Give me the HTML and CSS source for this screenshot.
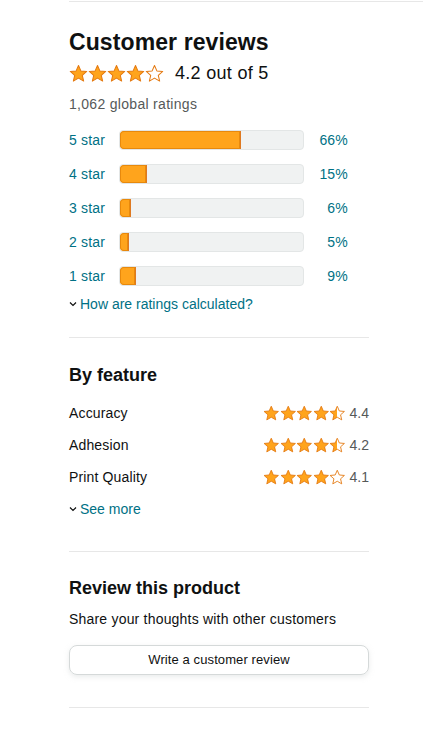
FILE: index.html
```html
<!DOCTYPE html>
<html lang="en">
<head>
    <meta charset="UTF-8">
    <title>Customer reviews</title>
    <link rel="stylesheet" href="styles.css">
</head>
<body>
    <svg width="0" height="0" class="defs">
        <defs>
            <linearGradient id="half">
                <stop offset="50%" stop-color="#FFA41C"/>
                <stop offset="50%" stop-color="#fff"/>
            </linearGradient>
            <symbol id="star" viewBox="0 0 24 24">
                <path d="M12 1.8l3 6.9 7.4.7-5.6 4.9 1.7 7.3L12 17.8l-6.5 3.8 1.7-7.3-5.6-4.9 7.4-.7z"/>
            </symbol>
        </defs>
    </svg>

    <div class="top-rule"></div>

    <div class="reviews">
        <h2 class="title">Customer reviews</h2>
        <div class="overall">
            <span class="stars big">
                <svg class="full"><use href="#star"/></svg>
                <svg class="full"><use href="#star"/></svg>
                <svg class="full"><use href="#star"/></svg>
                <svg class="full"><use href="#star"/></svg>
                <svg class="empty"><use href="#star"/></svg>
            </span>
            <span class="overall-text">4.2 out of 5</span>
        </div>
        <div class="total">1,062 global ratings</div>

        <div class="histogram">
            <div class="hist-row">
                <a class="hist-label" href="#">5 star</a>
                <div class="meter"><div class="meter-fill" style="width: 66%"></div></div>
                <a class="hist-pct" href="#">66%</a>
            </div>
            <div class="hist-row">
                <a class="hist-label" href="#">4 star</a>
                <div class="meter"><div class="meter-fill" style="width: 15%"></div></div>
                <a class="hist-pct" href="#">15%</a>
            </div>
            <div class="hist-row">
                <a class="hist-label" href="#">3 star</a>
                <div class="meter"><div class="meter-fill" style="width: 6%"></div></div>
                <a class="hist-pct" href="#">6%</a>
            </div>
            <div class="hist-row">
                <a class="hist-label" href="#">2 star</a>
                <div class="meter"><div class="meter-fill" style="width: 5%"></div></div>
                <a class="hist-pct" href="#">5%</a>
            </div>
            <div class="hist-row">
                <a class="hist-label" href="#">1 star</a>
                <div class="meter"><div class="meter-fill" style="width: 9%"></div></div>
                <a class="hist-pct" href="#">9%</a>
            </div>
        </div>

        <a class="expander calc" href="#">
            <svg class="chevron" viewBox="0 0 8 6"><path d="M1 1.5l3 3 3-3"/></svg>How are ratings calculated?
        </a>

        <hr class="divider first">

        <h3 class="subtitle">By feature</h3>
        <div class="features">
            <div class="feature-row">
                <span class="feature-name">Accuracy</span>
                <span class="feature-score">
                    <span class="stars small">
                        <svg class="full"><use href="#star"/></svg>
                        <svg class="full"><use href="#star"/></svg>
                        <svg class="full"><use href="#star"/></svg>
                        <svg class="full"><use href="#star"/></svg>
                        <svg class="half"><use href="#star"/></svg>
                    </span>
                    <span class="feature-value">4.4</span>
                </span>
            </div>
            <div class="feature-row">
                <span class="feature-name">Adhesion</span>
                <span class="feature-score">
                    <span class="stars small">
                        <svg class="full"><use href="#star"/></svg>
                        <svg class="full"><use href="#star"/></svg>
                        <svg class="full"><use href="#star"/></svg>
                        <svg class="full"><use href="#star"/></svg>
                        <svg class="half"><use href="#star"/></svg>
                    </span>
                    <span class="feature-value">4.2</span>
                </span>
            </div>
            <div class="feature-row">
                <span class="feature-name">Print Quality</span>
                <span class="feature-score">
                    <span class="stars small">
                        <svg class="full"><use href="#star"/></svg>
                        <svg class="full"><use href="#star"/></svg>
                        <svg class="full"><use href="#star"/></svg>
                        <svg class="full"><use href="#star"/></svg>
                        <svg class="empty"><use href="#star"/></svg>
                    </span>
                    <span class="feature-value">4.1</span>
                </span>
            </div>
        </div>

        <a class="expander more" href="#">
            <svg class="chevron" viewBox="0 0 8 6"><path d="M1 1.5l3 3 3-3"/></svg>See more
        </a>

        <hr class="divider second">

        <h3 class="subtitle write-title">Review this product</h3>
        <p class="share">Share your thoughts with other customers</p>
        <a class="write-btn" href="#">Write a customer review</a>

        <hr class="divider third">
    </div>
</body>
</html>
```

FILE: styles.css
```css
body {
    margin: 0;
    padding-top: 1px;
    font-family: "Liberation Sans", Arial, sans-serif;
    color: #0F1111;
    background-color: #fff;
}

a {
    color: #007185;
    text-decoration: none;
}

.defs {
    position: absolute;
    width: 0;
    height: 0;
}

.top-rule {
    margin-left: 69px;
    border-top: 1px solid #e7e7e7;
}

.reviews {
    width: 300px;
    margin-left: 69px;
}

.title {
    margin: 25px 0 0;
    font-size: 23px;
    line-height: 30px;
    font-weight: bold;
    letter-spacing: 0.1px;
}

/* stars */
.stars {
    display: inline-flex;
}

.stars svg {
    fill: #FFA41C;
    stroke: #E47911;
    stroke-width: 1.3;
    stroke-linejoin: round;
}

.stars svg.empty {
    fill: #fff;
}

.stars svg.half {
    fill: url(#half);
}

.stars.big svg {
    width: 19px;
    height: 19px;
}

.stars.small svg {
    width: 16.5px;
    height: 16.5px;
}

.overall {
    display: flex;
    align-items: center;
    margin-top: 4px;
    height: 24px;
}

.overall-text {
    margin-left: 11px;
    font-size: 18px;
    letter-spacing: 0.3px;
}

.total {
    margin-top: 9px;
    font-size: 14px;
    line-height: 20px;
    color: #565959;
    letter-spacing: 0.3px;
}

/* histogram */
.histogram {
    display: flex;
    flex-direction: column;
    gap: 14px;
    margin-top: 16px;
}

.hist-row {
    display: flex;
    align-items: center;
    height: 20px;
    font-size: 14px;
}

.hist-label {
    width: 50px;
    letter-spacing: 0.2px;
}

.meter {
    width: 183px;
    height: 18px;
    background-color: #F0F2F2;
    border: 1px solid #E3E6E6;
    border-radius: 4px;
    overflow: hidden;
}

.meter-fill {
    height: 100%;
    min-width: 8px;
    box-sizing: border-box;
    background-color: #FFA41C;
    border-right: 1px solid #DE7921;
    box-shadow: inset 0 0 0 1px #E8890C;
    border-radius: 4px 0 0 4px;
}

.hist-pct {
    width: 44px;
    text-align: right;
    letter-spacing: 0.2px;
}

.expander {
    display: flex;
    align-items: center;
    font-size: 14px;
    line-height: 20px;
}

.chevron {
    width: 8px;
    height: 6px;
    margin-right: 3px;
    fill: none;
    stroke: #0F1111;
    stroke-width: 1.2;
}

.calc {
    margin-top: 8px;
}

.divider {
    margin: 0;
    border: none;
    border-top: 1px solid #e7e7e7;
}

.divider.first {
    margin-top: 23px;
}

.subtitle {
    margin: 25px 0 0;
    font-size: 18px;
    line-height: 24px;
    font-weight: bold;
}

/* by feature */
.features {
    display: flex;
    flex-direction: column;
    gap: 12px;
    margin-top: 16px;
}

.feature-row {
    display: flex;
    justify-content: space-between;
    align-items: center;
    height: 20px;
    font-size: 14px;
}

.feature-name {
    letter-spacing: 0.15px;
}

.feature-score {
    display: flex;
    align-items: center;
}

.feature-value {
    margin-left: 4px;
    color: #565959;
}

.more {
    margin-top: 12px;
}

.divider.second {
    margin-top: 32px;
}

.write-title {
    margin-top: 24px;
}

.share {
    margin: 9px 0 0;
    font-size: 14px;
    line-height: 20px;
    letter-spacing: 0.2px;
}

.write-btn {
    display: block;
    margin-top: 16px;
    height: 28px;
    line-height: 28px;
    text-align: center;
    font-size: 13px;
    letter-spacing: 0.1px;
    color: #0F1111;
    border: 1px solid #D5D9D9;
    border-radius: 8px;
    box-shadow: 0 2px 5px 0 rgba(213, 217, 217, 0.5);
}

.divider.third {
    margin-top: 32px;
}
```
